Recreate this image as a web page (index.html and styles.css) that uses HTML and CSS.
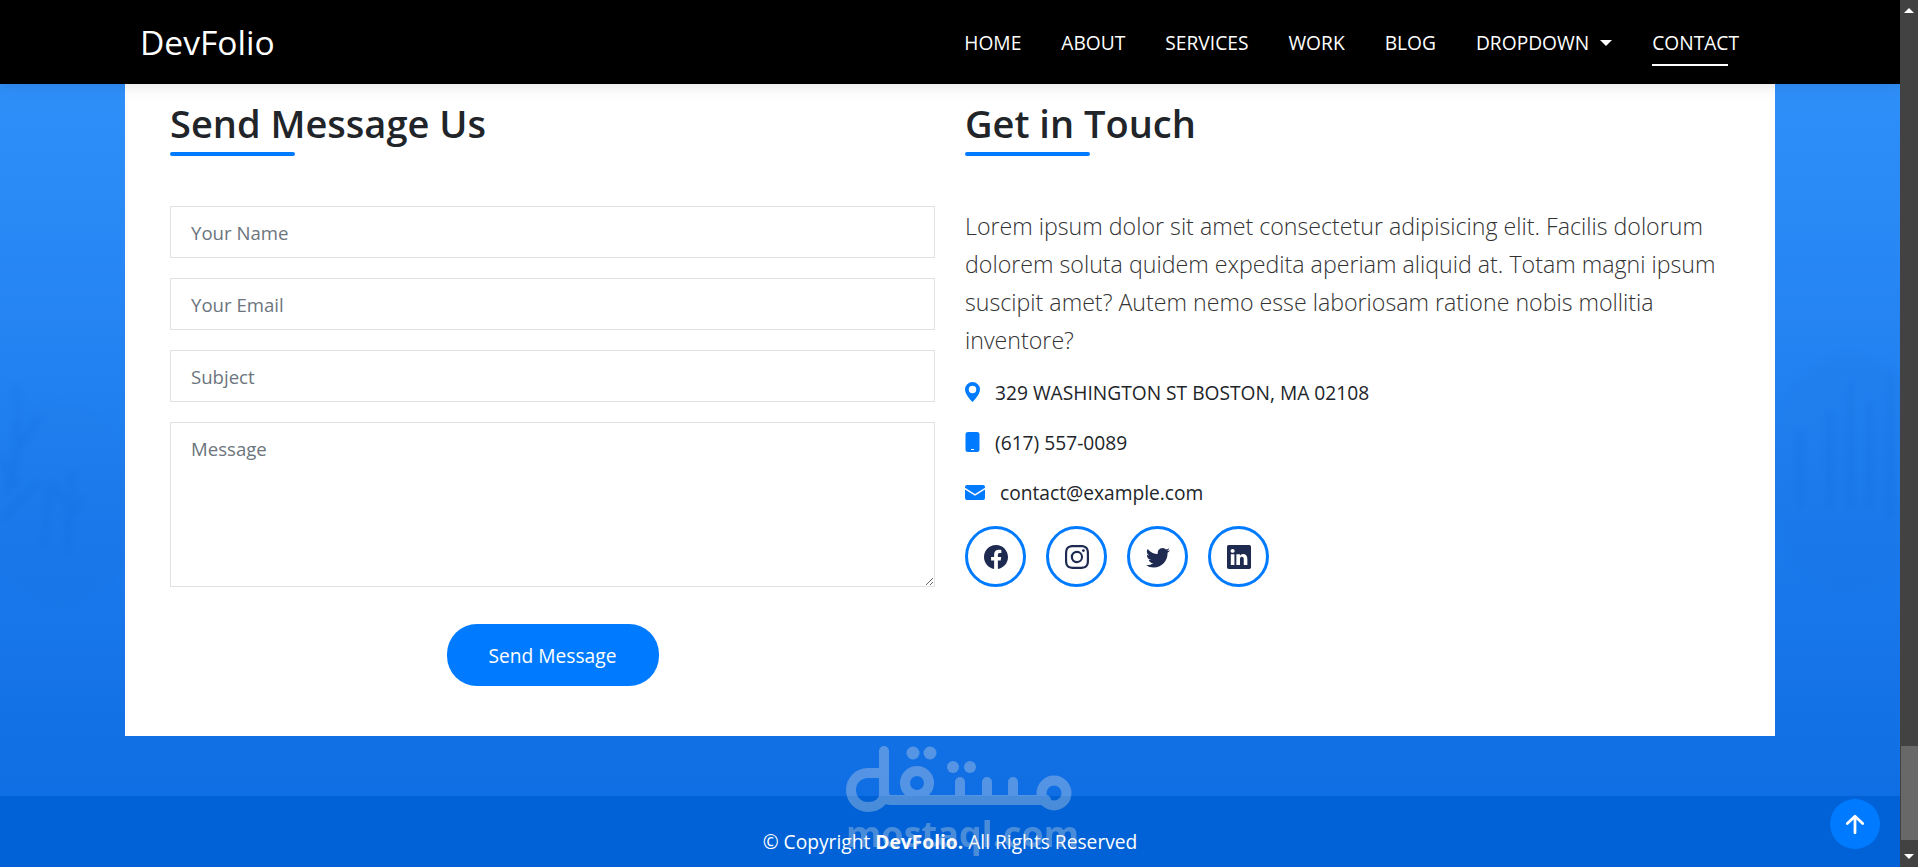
FILE: index.html
```html
<!DOCTYPE html>
<html lang="en">
<head>
<meta charset="utf-8">
<title>DevFolio</title>
<link rel="stylesheet" href="styles.css">
</head>
<body>
<div class="window">
  <div class="page">
    <header class="navbar">
      <a class="brand" href="#">DevFolio</a>
      <nav class="menu">
        <a href="#">HOME</a>
        <a href="#">ABOUT</a>
        <a href="#">SERVICES</a>
        <a href="#">WORK</a>
        <a href="#">BLOG</a>
        <a href="#" class="dropdown">DROPDOWN<span class="caret"></span></a>
        <a href="#" class="active">CONTACT</a>
      </nav>
    </header>

    <main class="content">
      <svg class="scenery" viewBox="0 0 1900 712" preserveAspectRatio="none" aria-hidden="true">
        <g fill="none" stroke="#0b5fd0" stroke-opacity=".16" stroke-width="6" stroke-linecap="round">
          <path d="M17 306v60l-10 40M17 366l20-30M17 400l-20-30M-3 440l40-40"/>
          <path d="M50 400l-6 60M72 390l-4 80M66 420l-14-20M66 440l16-24"/>
          <path d="M1830 330v90M1850 300v120M1870 320v100M1890 290v140M1800 350v70"/>
        </g>
        <g fill="#0b5fd0" fill-opacity=".06">
          <ellipse cx="60" cy="420" rx="80" ry="100"/>
          <ellipse cx="1850" cy="390" rx="80" ry="120"/>
        </g>
      </svg>
      <section class="card">
        <div class="col">
          <h2 class="title">Send Message Us</h2>
          <form class="form">
            <input class="field" type="text" placeholder="Your Name">
            <input class="field" type="email" placeholder="Your Email">
            <input class="field" type="text" placeholder="Subject">
            <textarea class="field area" placeholder="Message"></textarea>
            <button class="send" type="button">Send Message</button>
          </form>
        </div>
        <div class="col">
          <h2 class="title">Get in Touch</h2>
          <p class="lead">Lorem ipsum dolor sit amet consectetur adipisicing elit. Facilis dolorum dolorem soluta quidem expedita aperiam aliquid at. Totam magni ipsum suscipit amet? Autem nemo esse laboriosam ratione nobis mollitia inventore?</p>
          <ul class="info">
            <li><svg class="i-pin" viewBox="2 0 12 16"><path d="M8 16s6-5.686 6-10A6 6 0 0 0 2 6c0 4.314 6 10 6 10zm0-7a3 3 0 1 1 0-6 3 3 0 0 1 0 6z"/></svg><span>329 WASHINGTON ST BOSTON, MA 02108</span></li>
            <li><svg class="i-pin" viewBox="0 0 14 20"><path fill-rule="evenodd" d="M2.5 0h9A2.5 2.5 0 0 1 14 2.500v15a2.500 2.500 0 0 1-2.500 2.500h-9A2.500 2.500 0 0 1 0 17.500v-15A2.500 2.500 0 0 1 2.500 0zM5.500 17v1h3v-1z"/></svg><span>(617) 557-0089</span></li>
            <li class="mail"><svg class="i-mail" viewBox="0 0 20 15"><path d="M2 0h16a2 2 0 0 1 2 2v.8L10 9 0 2.800V2a2 2 0 0 1 2-2zM0 4.600l10 6.200 10-6.200V13a2 2 0 0 1-2 2H2a2 2 0 0 1-2-2z"/></svg><span>contact@example.com</span></li>
          </ul>
          <div class="socials">
            <a href="#"><svg viewBox="0 0 16 16"><path d="M16 8.049c0-4.446-3.582-8.050-8-8.050C3.580 0-.002 3.603-.002 8.050c0 4.017 2.926 7.347 6.750 7.951v-5.625h-2.030V8.050H6.750V6.275c0-2.017 1.195-3.131 3.022-3.131.876 0 1.791.157 1.791.157v1.980h-1.009c-.993 0-1.303.621-1.303 1.258v1.510h2.218l-.354 2.326H9.250V16c3.824-.604 6.750-3.934 6.750-7.951z"/></svg></a>
            <a href="#"><svg viewBox="0 0 16 16"><path d="M8 0C5.829 0 5.556.01 4.703.048 3.850.088 3.269.222 2.760.42a3.917 3.917 0 0 0-1.417.923A3.927 3.927 0 0 0 .42 2.760C.222 3.268.087 3.850.048 4.700.01 5.555 0 5.827 0 8.001c0 2.172.01 2.444.048 3.297.04.852.174 1.433.372 1.942.205.526.478.972.923 1.417.444.445.89.719 1.416.923.51.198 1.090.333 1.942.372C5.555 15.990 5.827 16 8 16s2.444-.01 3.298-.048c.851-.04 1.434-.174 1.943-.372a3.916 3.916 0 0 0 1.416-.923c.445-.445.718-.891.923-1.417.197-.509.332-1.090.372-1.942C15.990 10.445 16 10.173 16 8s-.01-2.445-.048-3.299c-.04-.851-.175-1.433-.372-1.941a3.926 3.926 0 0 0-.923-1.417A3.911 3.911 0 0 0 13.240.42c-.51-.198-1.092-.333-1.943-.372C10.443.01 10.172 0 7.998 0h.003zm-.717 1.442h.718c2.136 0 2.389.007 3.232.046.78.035 1.204.166 1.486.275.373.145.64.319.92.599.28.28.453.546.598.92.11.281.24.705.275 1.485.039.843.047 1.096.047 3.231s-.008 2.389-.047 3.232c-.035.78-.166 1.203-.275 1.485a2.470 2.470 0 0 1-.599.919c-.28.28-.546.453-.92.598-.28.11-.704.24-1.485.276-.843.038-1.096.047-3.232.047s-2.390-.009-3.233-.047c-.78-.036-1.203-.166-1.485-.276a2.478 2.478 0 0 1-.92-.598 2.480 2.480 0 0 1-.6-.92c-.109-.281-.24-.705-.275-1.485-.038-.843-.046-1.096-.046-3.233 0-2.136.008-2.388.046-3.231.036-.78.166-1.204.276-1.486.145-.373.319-.64.599-.92.28-.28.546-.453.92-.598.282-.11.705-.24 1.485-.276.738-.034 1.024-.044 2.515-.045v.002zm4.988 1.328a.96.96 0 1 0 0 1.920.96.96 0 0 0 0-1.920zm-4.270 1.122a4.109 4.109 0 1 0 0 8.217 4.109 4.109 0 0 0 0-8.217zm0 1.441a2.667 2.667 0 1 1 0 5.334 2.667 2.667 0 0 1 0-5.334z"/></svg></a>
            <a href="#"><svg viewBox="0 0 16 16"><path d="M5.026 15c6.038 0 9.341-5.003 9.341-9.334 0-.14 0-.282-.006-.422A6.685 6.685 0 0 0 16 3.542a6.658 6.658 0 0 1-1.889.518 3.301 3.301 0 0 0 1.447-1.817 6.533 6.533 0 0 1-2.087.793A3.286 3.286 0 0 0 7.875 6.030a9.325 9.325 0 0 1-6.767-3.429 3.289 3.289 0 0 0 1.018 4.382A3.323 3.323 0 0 1 .64 6.575v.045a3.288 3.288 0 0 0 2.632 3.218 3.203 3.203 0 0 1-.865.115 3.230 3.230 0 0 1-.614-.057 3.283 3.283 0 0 0 3.067 2.277A6.588 6.588 0 0 1 .78 13.580a6.320 6.320 0 0 1-.78-.045A9.344 9.344 0 0 0 5.026 15z"/></svg></a>
            <a href="#"><svg viewBox="0 0 16 16"><path d="M0 1.146C0 .513.526 0 1.175 0h13.650C15.474 0 16 .513 16 1.146v13.708c0 .633-.526 1.146-1.175 1.146H1.175C.526 16 0 15.487 0 14.854V1.146zm4.943 12.248V6.169H2.542v7.225h2.401zm-1.200-8.212c.837 0 1.358-.554 1.358-1.248-.015-.709-.52-1.248-1.342-1.248-.822 0-1.359.54-1.359 1.248 0 .694.521 1.248 1.327 1.248h.016zm4.908 8.212V9.359c0-.216.016-.432.08-.586.173-.431.568-.878 1.232-.878.869 0 1.216.662 1.216 1.634v3.865h2.401V9.250c0-2.220-1.184-3.252-2.764-3.252-1.274 0-1.845.7-2.165 1.193v.025h-.016a5.540 5.540 0 0 1 .016-.025V6.169h-2.400c.03.678 0 7.225 0 7.225h2.400z"/></svg></a>
          </div>
        </div>
      </section>
    </main>

    <div class="watermark" aria-hidden="true">
      <svg viewBox="0 0 226 68">
        <g class="wm-strokes">
          <path d="M38 5v40c0 3 1 9 6 9h156"/>
          <path d="M38 27H22C12 27 5 35 5 44s7 17 17 17c10 0 16-6 16-12"/>
          <circle cx="71" cy="37" r="12"/>
          <path d="M114 52V36M141 52V36M167 52V36"/>
          <circle cx="208" cy="47" r="12.500"/>
        </g>
        <g class="wm-dots">
          <circle cx="67" cy="7" r="6.500"/><circle cx="84" cy="7" r="6.500"/>
          <circle cx="107" cy="21" r="6"/><circle cx="124" cy="21" r="6"/>
        </g>
      </svg>
      <span class="wm-text">mostaql.com</span>
    </div>

    <footer class="footer">
      <p>© Copyright <strong>DevFolio.</strong> All Rights Reserved</p>
    </footer>

    <a class="to-top" href="#"><svg viewBox="0 0 20 20"><path d="M10 18V3M3 9.500 10 3l7 6.500"/></svg></a>
  </div>

  <aside class="scrollbar" aria-hidden="true">
    <span class="arrow up"></span>
    <span class="track"><span class="thumb"></span></span>
    <span class="arrow down"></span>
  </aside>
</div>
</body>
</html>
```
FILE: styles.css
```css
* { box-sizing: border-box; }
html, body { margin: 0; height: 100%; overflow: hidden; }
body { font-family: "Open Sans", "Noto Sans", sans-serif; color: #212529; }
a { text-decoration: none; color: inherit; }

.window { display: flex; height: 867px; width: 1918px; }
.page { position: relative; flex: 1; display: flex; flex-direction: column; overflow: hidden; }

.navbar {
  position: relative; z-index: 2; height: 84px; flex: none;
  background: #000; color: #fff;
  display: flex; align-items: center; justify-content: space-between;
  padding: 0 161px 0 140px;
  box-shadow: 0 2px 15px rgba(0, 0, 0, .1);
}
.brand { font-size: 33.600px; }
.menu { display: flex; gap: 40px; font-size: 19.200px; }
.menu a { position: relative; }
.caret {
  display: inline-block; margin-left: 11px; vertical-align: 4px;
  border-top: 6px solid #fff; border-left: 6px solid transparent; border-right: 6px solid transparent;
}
.active::after {
  content: ""; position: absolute; left: 0; top: 35px; width: 76px; height: 2px; background: #fff;
}

.content {
  position: relative; flex: 1; padding: 0 125px 60px; min-height: 0;
  background: linear-gradient(180deg, #2f8ff9 0%, #106ee4 100%);
}
.scenery { position: absolute; inset: 0; width: 100%; height: 100%; filter: blur(3px); }
.card {
  position: relative; height: 652px; background: #fff;
  padding: 13px 45px 0;
  display: grid; grid-template-columns: 765px 765px; gap: 30px;
}
.col { min-width: 0; }
.title {
  position: relative; margin: 0; font-size: 38px; font-weight: 600; line-height: 52px;
  height: 59px;
}
.title::after {
  content: ""; position: absolute; left: 0; bottom: 0; width: 125px; height: 4px;
  background: #007bff; border-radius: 2px;
}

.form { display: flex; flex-direction: column; gap: 20px; margin-top: 50px; }
.field {
  display: block; width: 100%; height: 52px; padding: 1px 20px 0;
  border: 1px solid #dee2e6; background: #fff; border-radius: 0;
  font: 18.600px "Open Sans", "Noto Sans", sans-serif; color: #495057; outline: none;
}
.field::placeholder { color: #6c757d; opacity: 1; }
.area { height: 165px; padding-top: 13px; }
.send {
  align-self: center; margin-top: 17px; width: 212px; height: 62px;
  border: 0; border-radius: 30px; background: #007bff; color: #fff;
  font: 19.200px "Open Sans", "Noto Sans", sans-serif;
}

.lead { margin: 51px 0 0; font-size: 23.200px; font-weight: 300; line-height: 38px; color: #333; }
.info { list-style: none; margin: 8px 0 0; padding: 0; font-size: 19.200px; }
.info li { display: flex; align-items: center; gap: 15px; height: 50px; }
.info svg { fill: #007bff; flex: none; }
.i-pin { width: 15px; height: 20px; }
.i-mail { width: 20px; height: 15px; }
.socials { display: flex; gap: 20px; margin-top: 9px; }
.socials a {
  width: 61px; height: 61px; border: 3px solid #007bff; border-radius: 50%;
  display: flex; align-items: center; justify-content: center;
}
.socials svg { width: 24px; height: 24px; fill: #1e2a4f; }

.footer {
  position: relative; height: 71px; flex: none; background: #0062d6; color: #fff;
  display: flex; align-items: flex-end; justify-content: center; padding-bottom: 12px;
}
.footer p { margin: 0; font-size: 19.200px; position: relative; z-index: 2; }

.to-top {
  position: absolute; right: 20px; bottom: 18px; z-index: 3;
  width: 50px; height: 50px; border-radius: 50%; background: #007bff;
  display: flex; align-items: center; justify-content: center;
}
.to-top svg { width: 22px; height: 22px; fill: none; stroke: #fff; stroke-width: 2.500; stroke-linecap: round; stroke-linejoin: round; }

.watermark {
  position: absolute; left: 846px; top: 746px; width: 226px; z-index: 1;
  opacity: .32; pointer-events: none;
}
.footer { z-index: 0; }
.watermark { z-index: 1; }
.footer p { z-index: auto; }
.watermark svg { display: block; width: 226px; height: 68px; }
.wm-strokes { fill: none; stroke: #e4e4e4; stroke-width: 10; stroke-linecap: round; stroke-linejoin: round; }
.wm-dots { fill: #e4e4e4; }
.wm-text { display: block; font: 700 36px/40px "Open Sans", sans-serif; color: #e4e4e4; white-space: nowrap; text-align: center; }

.scrollbar { width: 18px; flex: none; background: #424242; display: flex; flex-direction: column; align-items: center; }
.arrow { flex: none; width: 0; height: 0; margin: 8px 0; border-left: 5px solid transparent; border-right: 5px solid transparent; }
.up { border-bottom: 5px solid #fff; }
.down { border-top: 5px solid #fff; }
.track { flex: 1; width: 100%; display: flex; flex-direction: column; justify-content: flex-end; padding: 0 0 6px 1px; }
.thumb { display: block; height: 94px; background: #686868; }
```
